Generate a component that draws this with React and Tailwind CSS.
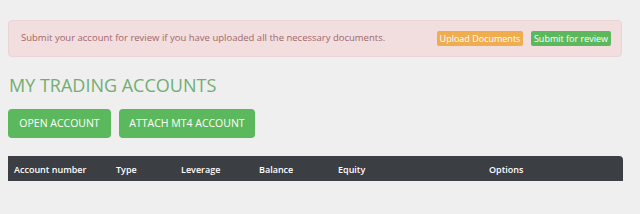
export default function App() {
  const cols = [
    { label: 'Account number', w: 'w-[102px]' },
    { label: 'Type', w: 'w-[65px]' },
    { label: 'Leverage', w: 'w-[78px]' },
    { label: 'Balance', w: 'w-[79px]' },
    { label: 'Equity', w: 'w-[151px]' },
    { label: 'Options', w: 'flex-1' },
  ]

  return (
    <div className="w-[640px] h-[214px] bg-[#efefef] px-2 pt-5 overflow-hidden" style={{ fontFamily: '"Open Sans", sans-serif' }}>
      {/* Alert */}
      <div className="w-[614px] h-[37px] flex items-center justify-between bg-[#f2dede] border border-[#ebd4d6] rounded pl-3 pr-[10px]">
        <span className="text-[9.5px] text-[#a0676a] whitespace-nowrap">
          Submit your account for review if you have uploaded all the necessary documents.
        </span>
        <div className="flex gap-2">
          <button className="h-[15px] w-[86px] bg-[#f0ad4e] text-white text-[9px] leading-[15px] rounded-[2px] whitespace-nowrap">
            Upload Documents
          </button>
          <button className="h-[15px] w-[80px] bg-[#5cb85c] text-white text-[9px] leading-[15px] rounded-[2px] whitespace-nowrap">
            Submit for review
          </button>
        </div>
      </div>

      <h1 className="mt-[14px] ml-px text-[18px] leading-[28px] text-[#72ad74]">MY TRADING ACCOUNTS</h1>

      <div className="flex gap-2 mt-[10px]">
        <button className="h-[29px] w-[103px] bg-[#5cb85c] text-white text-[10.5px] rounded whitespace-nowrap">OPEN ACCOUNT</button>
        <button className="h-[29px] w-[136px] bg-[#5cb85c] text-white text-[10.5px] rounded whitespace-nowrap">ATTACH MT4 ACCOUNT</button>
      </div>

      {/* Table header */}
      <div className="mt-[18px] w-[615px] h-[25px] flex items-center bg-[#3b3e43] rounded-tr pl-[6px] pt-[2px] text-white text-[9px] leading-[12px] font-semibold">
        {cols.map((c) => (
          <div key={c.label} className={c.w}>{c.label}</div>
        ))}
      </div>
    </div>
  )
}
